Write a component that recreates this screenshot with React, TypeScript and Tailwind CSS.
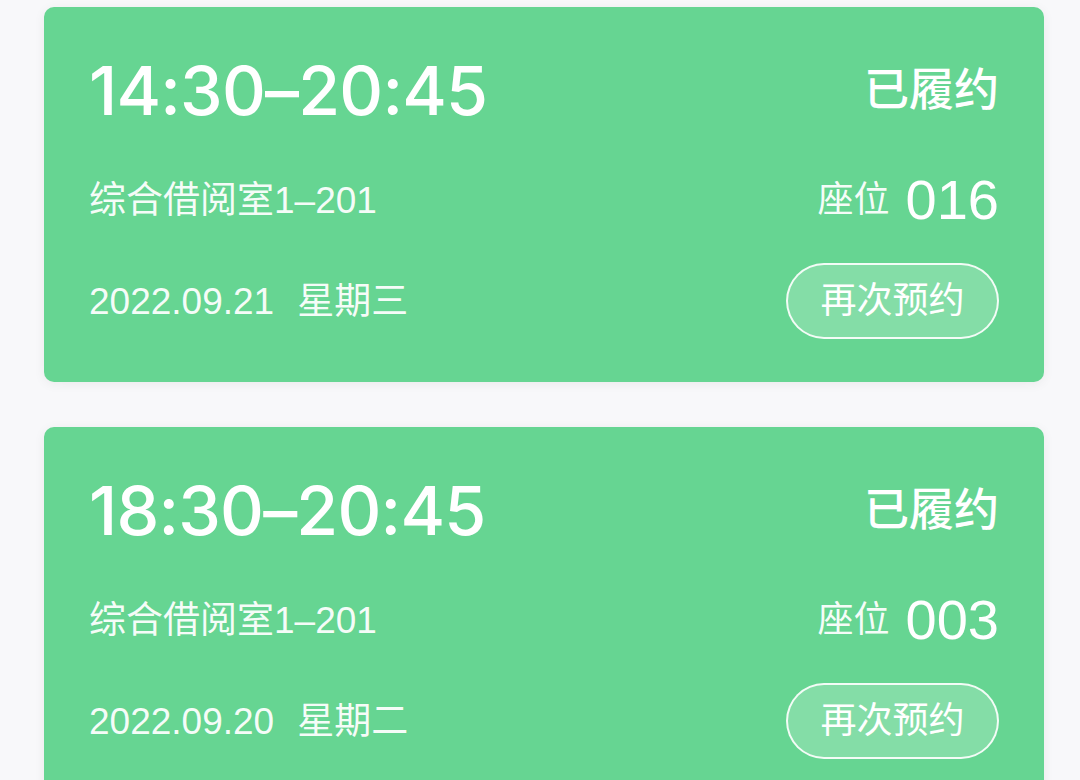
const font = { fontFamily: '"Liberation Sans", "Noto Sans CJK SC", sans-serif' };
const timeFont = { fontFamily: 'Inter, "Liberation Sans", sans-serif' };

interface Booking {
  time: string;
  room: string;
  seat: string;
  date: string;
  weekday: string;
}

const bookings: Booking[] = [
  { time: '14:30–20:45', room: '综合借阅室1–201', seat: '016', date: '2022.09.21', weekday: '星期三' },
  { time: '18:30–20:45', room: '综合借阅室1–201', seat: '003', date: '2022.09.20', weekday: '星期二' },
];

function BookingCard({ b }: { b: Booking }) {
  return (
    <div className="flex flex-col rounded-[10px] bg-[#66d592] px-[45px] pt-[47px] pb-[43px] text-white shadow-[0_2px_12px_rgba(0,0,0,0.06)]">
      <div className="flex h-[72px] items-center justify-between">
        <span className="text-[68px] font-medium leading-none tracking-[-0.8px]" style={timeFont}>
          {b.time}
        </span>
        <span className="text-[45px] font-medium leading-none">已履约</span>
      </div>
      <div className="mt-[44px] flex h-[60px] items-center justify-between">
        <span className="text-[37px] leading-none text-white/95">{b.room}</span>
        <span className="flex items-center gap-[16px] leading-none">
          <span className="text-[36px] text-white/95">座位</span>
          <span className="text-[56px]">{b.seat}</span>
        </span>
      </div>
      <div className="mt-[33px] flex h-[76px] items-center justify-between">
        <span className="text-[37px] leading-none text-white/95">
          {b.date}
          <span className="ml-[23px]">{b.weekday}</span>
        </span>
        <button className="flex h-[76px] w-[213px] items-center justify-center rounded-full border-2 border-white/90 bg-white/20 text-[36px] leading-none text-white">
          再次预约
        </button>
      </div>
    </div>
  );
}

export default function App() {
  return (
    <div className="h-[780px] overflow-hidden bg-[#f8f8fa]" style={font}>
      <div className="flex flex-col gap-[45px] pl-[44px] pr-[36px] pt-[7px]">
        {bookings.map((b) => (
          <BookingCard key={b.time} b={b} />
        ))}
      </div>
    </div>
  );
}
